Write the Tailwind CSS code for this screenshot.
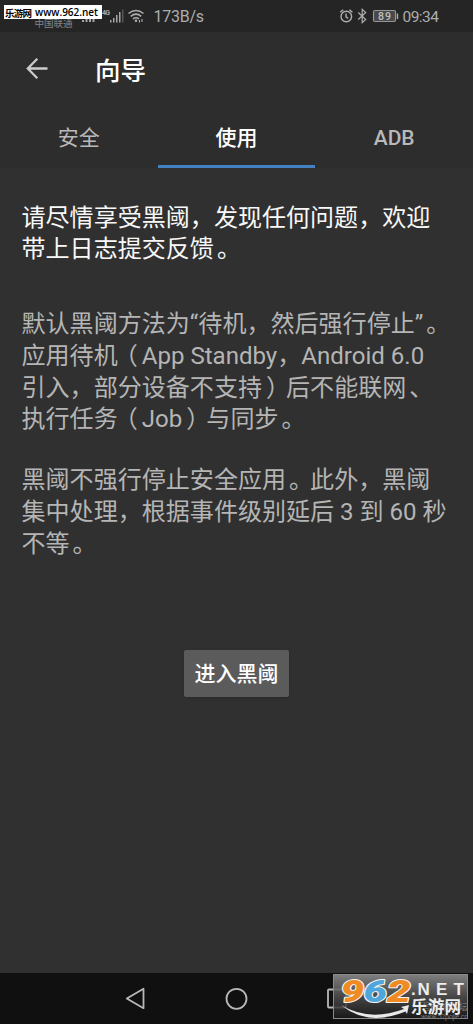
<!DOCTYPE html>
<html lang="zh-CN">
<head>
<meta charset="utf-8">
<title>向导</title>
<script src="https://cdn.jsdelivr.net/npm/@tailwindcss/browser@4"></script>
</head>
<body class="bg-[#303030]">
<div class="relative flex flex-col w-[473px] h-[1024px] overflow-hidden bg-[#303030] font-[Roboto,'Noto_Sans_CJK_SC',sans-serif]">
  <!-- Status bar -->
  <header class="h-8 shrink-0 bg-[#252525] text-[#adadad]">
    <svg class="block" width="473" height="32" fill="none" stroke="#adadad">
      <text x="34.5" y="27" font-size="9.6" textLength="38" fill="#858585" stroke="none">中国联通</text>
      <g fill="#a5a5a5" stroke="none">
        <path d="M82 20h2v2h-2zM85.500 18h2v4h-2zM89 16h2v6h-2zM92.500 13h2v9h-2z"/>
        <path d="M110 20h1.500v2.500H110zM113 18h1.500v4.500H113zM116 15h1.500v7.500H116zM119 12h1.500v10.500H119z"/>
        <path d="M122 9.500h1.500v13H122z" fill="#555"/>
        <text x="102" y="15" font-size="7" font-weight="700" textLength="8">4G</text>
      </g>
      <g stroke-width="1.600">
        <path d="M128.500 13.500Q136 7.500 143.500 13.500M130.800 16.300Q136 12 141.200 16.300M133 19Q136 16.500 139 19"/>
        <circle cx="136" cy="20.800" r="1.300" fill="#adadad" stroke="none"/>
        <path d="M139.500 20v2.500M142 19v3" stroke-width="1.100"/>
      </g>
      <text x="153.500" y="22" font-size="16" textLength="50.500" fill="#adadad" stroke="none">173B/s</text>
      <g stroke-width="1.400">
        <circle cx="346.300" cy="16.500" r="5.300"/>
        <path d="M346 13.500v3.300l2.200 1.600M340.200 12.300l3-2.600M352.400 12.300l-3-2.600"/>
        <path d="M358.300 12.500l7.400 7-3.500 3.200V9.300l3.500 3.200-7.400 7" stroke-width="1.200"/>
      </g>
      <rect x="373.500" y="10.500" width="22" height="11" rx="1.500" fill="#494949" stroke="#969696" stroke-width="1.200"/>
      <path d="M397.500 13.500v5.500" stroke-width="1.400"/>
      <text x="378" y="20" font-size="10.500" font-weight="500" textLength="13" fill="#c0c0c0" stroke="none">89</text>
      <text x="402.500" y="22" font-size="15.500" textLength="36.500" fill="#adadad" stroke="none">09:34</text>
    </svg>
  </header>

  <!-- Title bar and tabs -->
  <div class="shrink-0 h-[136px] bg-[#2d2d2d]">
    <div class="flex items-center h-[74px] pl-[25px]">
      <svg width="24" height="24" fill="none" stroke="#cbcbcb" stroke-width="2.300"><path d="M22.500 11.500H3M12.300 1.700L2.800 11.500l9.500 9.800"/></svg>
      <h1 class="pl-[46px] pt-[3px] text-[25.5px] leading-[38px] font-medium text-white">向导</h1>
    </div>
    <nav class="grid grid-cols-3 h-[62px] text-[21px] leading-[64px] font-medium text-center text-[#b9b9b9]">
      <div class="font-normal">安全</div>
      <div class="relative text-white">使用<span class="absolute left-0 right-0 top-[59px] h-[3px] bg-[#4381c0]"></span></div>
      <div>ADB</div>
    </nav>
  </div>

  <!-- Guide text -->
  <main class="flex-1 pl-[21.5px] pt-[34.500px] text-[24.050px] leading-[31.800px] whitespace-nowrap font-normal text-[#b5b5b5]">
    <p class="text-[#f8f8f8]">请尽情享受黑阈，发现任何问题，欢迎<br>带上日志提交反馈<span class="inline-block translate-x-[3px]">。</span></p>
    <p class="mt-[43px]">默认黑阈方法为“待机，然后强行停止”<span class="inline-block translate-x-[3px]">。</span><br>应用待机<span class="inline-block -translate-x-[4px]">（</span>App Standby，Android 6.0<br>引入，部分设备不支持<span class="inline-block translate-x-[4px]">）</span>后不能联网<span class="inline-block translate-x-[3px]">、</span><br>执行任务<span class="inline-block -translate-x-[4px]">（</span>Job<span class="inline-block translate-x-[4px]">）</span>与同步<span class="inline-block translate-x-[3px]">。</span></p>
    <p class="mt-[29px]">黑阈不强行停止安全应用<span class="inline-block translate-x-[3px]">。</span>此外，黑阈<br>集中处理，根据事件级别延后 3 到 60 秒<br>不等<span class="inline-block translate-x-[3px]">。</span></p>
    <button class="block mt-[89.500px] ml-[162.500px] w-[105px] h-[47px] pt-[2px] rounded-[2px] bg-[#5b5b5c] text-[21px] font-medium text-white shadow-sm">进入黑阈</button>
  </main>

  <!-- Navigation bar -->
  <footer class="h-[51px] shrink-0 bg-[#101010]">
    <svg class="block" width="473" height="51" fill="none" stroke="#b8b8b8" stroke-width="1.800" stroke-linejoin="round">
      <path d="M126.800 25.500L143.500 15.800V35.200Z"/>
      <circle cx="236.500" cy="25.800" r="10"/>
      <rect x="328" y="16.500" width="18" height="18" rx="1"/>
    </svg>
  </footer>

  <!-- Site badges -->
  <div class="absolute left-1 top-[5px] w-[98px] h-[14px] bg-white">
    <svg class="block" width="98" height="14" fill="#000" font-weight="700">
      <text x="1" y="11.500" font-size="9.500" textLength="27" font-family="Noto Sans CJK SC">乐游网</text>
      <text x="31" y="11" font-size="10.500" textLength="63" lengthAdjust="spacingAndGlyphs" font-weight="600" font-family="Open Sans">www.962.net</text>
    </svg>
  </div>
  <svg class="absolute left-[320px] top-[973px]" width="153" height="51">
    <defs>
      <linearGradient id="badge" x1="0" y1="0" x2="0" y2="1"><stop offset="0" stop-color="#8b8b8b" stop-opacity=".9"/><stop offset=".5" stop-color="#505050" stop-opacity=".85"/><stop offset="1" stop-color="#1c1c1c" stop-opacity=".8"/></linearGradient>
    </defs>
    <rect x="13.500" y="1.500" width="134" height="44" fill="url(#badge)" stroke="#8a8a8a"/>
    <g fill="#777" font-size="9">
      <text x="101" y="37" textLength="47">吾爱破解论坛</text>
      <text x="101" y="46" font-size="7" textLength="47">www.52pojie.cn</text>
    </g>
    <g font-family="Roboto" font-weight="900" font-style="italic" font-size="32" stroke="#f4f4f4" stroke-width="2" paint-order="stroke" stroke-linejoin="round">
      <text x="20.500" y="28.500" textLength="23.500" lengthAdjust="spacingAndGlyphs" fill="#ef8b22">9</text>
      <text x="43.500" y="28.500" textLength="23.500" lengthAdjust="spacingAndGlyphs" fill="#4fa6dc">6</text>
      <text x="67" y="28.500" textLength="23.500" lengthAdjust="spacingAndGlyphs" fill="#ef8b22">2</text>
    </g>
    <path d="M21 32Q49 49 84 36l-3-2 8-2-2 9-1.500-2.500Q48 54 21 32Z" fill="#e9e9e9"/>
    <text x="91" y="22" font-family="Liberation Sans" font-size="17" font-weight="700" textLength="5" fill="#ededed">.</text>
    <text x="97.500" y="22" font-family="Liberation Sans" font-size="17" font-weight="700" textLength="46.500" fill="#ededed">NET</text>
    <text x="91" y="40" font-family="Noto Sans CJK SC" font-size="16.500" font-weight="700" textLength="50" fill="#ededed">乐游网</text>
  </svg>
</div>
</body>
</html>
